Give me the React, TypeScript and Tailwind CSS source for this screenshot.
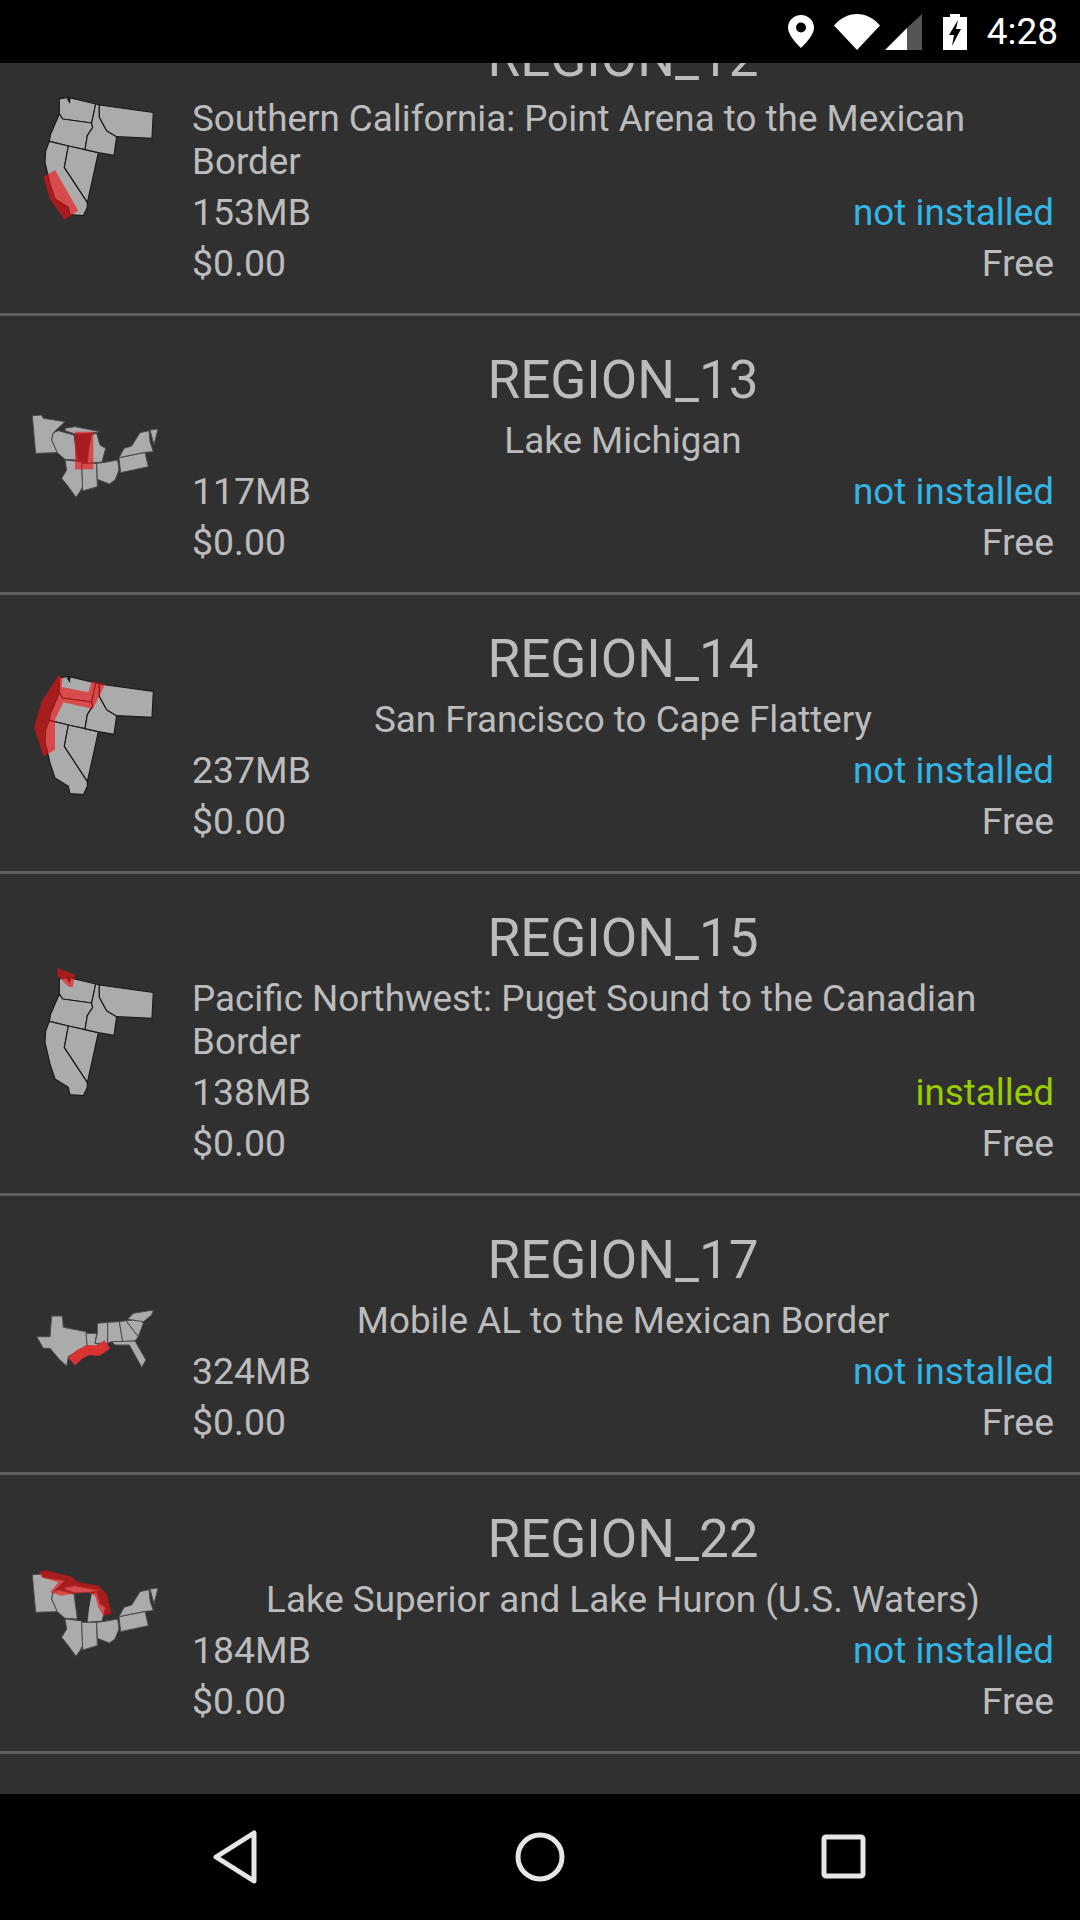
const WEST_STATES = [
  "178,85 205,80 287,100 275,157 188,145 178,130",
  "178,130 188,145 275,157 278,170 262,195 255,237 205,226 148,212 152,190",
  "148,212 205,226 193,290 262,395 262,410 250,435 210,432 205,410 165,385 150,340 135,275 137,240",
  "205,226 295,246 270,360 262,395 193,290",
  "287,100 298,103 298,140 320,180 350,198 342,254 295,246 255,237 262,195 278,170 275,157",
  "298,103 460,125 456,203 350,198 320,180 298,140",
];

const LAKES_STATES = [
  "97,107 125,105 130,115 195,125 160,158 155,180 172,218 107,220",
  "160,158 175,152 222,165 232,240 195,238 172,218 155,180",
  "195,145 225,140 300,155 270,160 225,162 195,152",
  "268,165 290,160 300,195 317,205 306,246 262,250",
  "195,240 245,245 248,320 240,335 228,352 205,320 185,295 200,270",
  "245,250 290,250 292,320 248,333",
  "290,250 315,247 353,240 357,270 345,300 328,312 292,298",
  "357,233 435,217 445,260 362,278",
  "357,233 372,205 395,198 420,158 447,152 450,185 460,215 435,217",
  "450,150 474,147 462,195",
];

const SOUTH_STATES = [
  "155,108 187,108 190,142 258,155 262,195 205,230 200,258 178,238 150,205 130,205 110,170 150,170",
  "258,160 290,160 285,190 310,197 262,200",
  "292,130 323,127 323,190 285,190 292,160",
  "323,127 358,125 368,185 335,185 323,190",
  "358,125 378,122 415,170 405,183 368,185",
  "378,122 420,118 430,130 415,170",
  "385,115 400,100 460,90 455,105 430,125 385,118",
  "335,185 405,183 438,240 425,262 410,235 388,195 345,195",
];

type MapKind = "west" | "lakes" | "south";

type Region = {
  name: string;
  description: string;
  size: string;
  installed?: boolean;
  map: MapKind;
  highlight: string;
  lake?: boolean;
};

const regions: Region[] = [
  {
    name: "REGION_12",
    description: "Southern California: Point Arena to the Mexican Border",
    size: "153MB",
    map: "west",
    highlight: "130,318 165,298 235,420 193,447 150,385",
  },
  {
    name: "REGION_13",
    description: "Lake Michigan",
    size: "117MB",
    map: "lakes",
    highlight: "225,155 280,155 280,268 225,268",
    lake: true,
  },
  {
    name: "REGION_14",
    description: "San Francisco to Cape Flattery",
    size: "237MB",
    map: "west",
    highlight:
      "175,78 188,85 185,112 265,128 275,95 315,103 295,145 278,178 190,158 165,210 165,300 130,320 102,232 125,155",
  },
  {
    name: "REGION_15",
    description: "Pacific Northwest: Puget Sound to the Canadian Border",
    size: "138MB",
    installed: true,
    map: "west",
    highlight: "172,52 225,72 218,110 205,108 183,85 172,75",
  },
  {
    name: "REGION_17",
    description: "Mobile AL to the Mexican Border",
    size: "324MB",
    map: "south",
    highlight: "",
  },
  {
    name: "REGION_22",
    description: "Lake Superior and Lake Huron (U.S. Waters)",
    size: "184MB",
    map: "lakes",
    highlight:
      "118,100 135,93 215,113 235,130 295,140 320,165 335,225 310,230 295,205 285,170 265,160 215,165 185,170 150,160 175,130 125,115",
    lake: true,
  },
];

function RegionMap({ region }: { region: Region }) {
  const states =
    region.map === "west"
      ? WEST_STATES
      : region.map === "lakes"
        ? LAKES_STATES
        : SOUTH_STATES;
  const viewBox =
    region.map === "west"
      ? "0 40 576 420"
      : region.map === "lakes"
        ? "0 12 576 420"
        : "0 -48 576 420";

  return (
    <svg
      viewBox={viewBox}
      className="w-[192px] h-[140px] shrink-0 blur-[0.4px]"
    >
      {states.map((points) => (
        <polygon
          key={points}
          points={points}
          fill="#ababab"
          stroke={region.map === "west" ? "#1a1a1a" : "#4a4a4a"}
          strokeWidth={region.map === "west" ? 3.5 : 3}
          strokeLinejoin="round"
        />
      ))}
      {region.map === "west" && (
        <polygon points="200,85 212,78 210,100" fill="#1c1c1c" />
      )}
      {region.lake && (
        <polygon points="240,165 275,165 260,245 232,245" fill="#303030" />
      )}
      {region.highlight && (
        <polygon points={region.highlight} fill="#f01010" opacity={0.62} />
      )}
      {region.map === "south" && (
        <polyline
          points="215,245 240,222 265,210 295,212 322,193"
          fill="none"
          stroke="#d93232"
          strokeWidth={30}
          strokeLinejoin="round"
        />
      )}
    </svg>
  );
}

function RegionRow({ region }: { region: Region }) {
  return (
    <div className="flex items-center border-b-[3px] border-[#5e5e5e]">
      <RegionMap region={region} />
      <div className="flex-1 min-w-0 pr-[26px] pt-[36px] pb-[28px] text-[36.8px] leading-[43px] text-[#bcbcbc]">
        <div className="text-center text-[53px] leading-[56px] mb-[11px]">
          {region.name}
        </div>
        <div className="w-fit mx-auto mb-[8px]">{region.description}</div>
        <div className="flex justify-between mb-[8px]">
          <span className="text-[37.4px]">{region.size}</span>
          <span className={region.installed ? "text-[#99cc00]" : "text-[#33b5e5]"}>
            {region.installed ? "installed" : "not installed"}
          </span>
        </div>
        <div className="flex justify-between text-[37.4px]">
          <span>$0.00</span>
          <span>Free</span>
        </div>
      </div>
    </div>
  );
}

function StatusBar() {
  return (
    <div className="h-[63px] shrink-0 bg-black flex items-center justify-end pr-[22px] z-10">
      <svg viewBox="0 0 26 33" className="w-[26px] h-[33px] mr-[20px]">
        <path
          fillRule="evenodd"
          d="M13 0C5.8 0 0 5.6 0 12.8 0 21.5 13 33 13 33s13-11.500 13-20.200C26 5.600 20.200 0 13 0zm0 17.500a5 5 0 1 1 0-10 5 5 0 0 1 0 10z"
          fill="#fff"
        />
      </svg>
      <svg viewBox="0 0 46 36" className="w-[46px] h-[36px] mr-[5px]">
        <path d="M0 11.500C6 4.500 14 0 23 0s17 4.500 23 11.500L23 36z" fill="#fff" />
      </svg>
      <svg viewBox="0 0 37 36" className="w-[37px] h-[36px] mr-[21px]">
        <polygon points="0,36 22,14 22,36" fill="#fff" />
        <polygon points="22,14 37,0 37,36 22,36" fill="#555" />
      </svg>
      <svg viewBox="0 0 24 36" className="w-[24px] h-[36px] mr-[20px]">
        <path d="M7 0h10v3h7v33H0V3h7z" fill="#fff" />
        <polygon points="15,6 6,21 11,21 9,32 18,15 13,15" fill="#000" />
      </svg>
      <span className="text-[37px] leading-none text-white">4:28</span>
    </div>
  );
}

function NavBar() {
  return (
    <div className="h-[126px] shrink-0 bg-black flex items-center justify-center gap-[244px] z-10">
      <svg viewBox="0 0 60 60" className="w-[60px] h-[60px]">
        <polygon
          points="10,30 48,6 48,54"
          fill="none"
          stroke="#e6e6e6"
          strokeWidth={5}
          strokeLinejoin="round"
        />
      </svg>
      <svg viewBox="0 0 60 60" className="w-[60px] h-[60px]">
        <circle cx="30" cy="30" r="22" fill="none" stroke="#e6e6e6" strokeWidth={5} />
      </svg>
      <svg viewBox="0 0 60 60" className="w-[60px] h-[60px]">
        <rect
          x="10"
          y="10"
          width="39"
          height="39"
          rx="2"
          fill="none"
          stroke="#e6e6e6"
          strokeWidth={5}
        />
      </svg>
    </div>
  );
}

export default function App() {
  return (
    <div
      className="w-[1080px] h-[1920px] flex flex-col overflow-hidden bg-[#303030]"
      style={{ fontFamily: "Roboto, sans-serif" }}
    >
      <StatusBar />
      <div className="flex-1 min-h-0 overflow-hidden">
        <div className="-mt-[69px]">
          {regions.map((region) => (
            <RegionRow key={region.name} region={region} />
          ))}
        </div>
      </div>
      <NavBar />
    </div>
  );
}
